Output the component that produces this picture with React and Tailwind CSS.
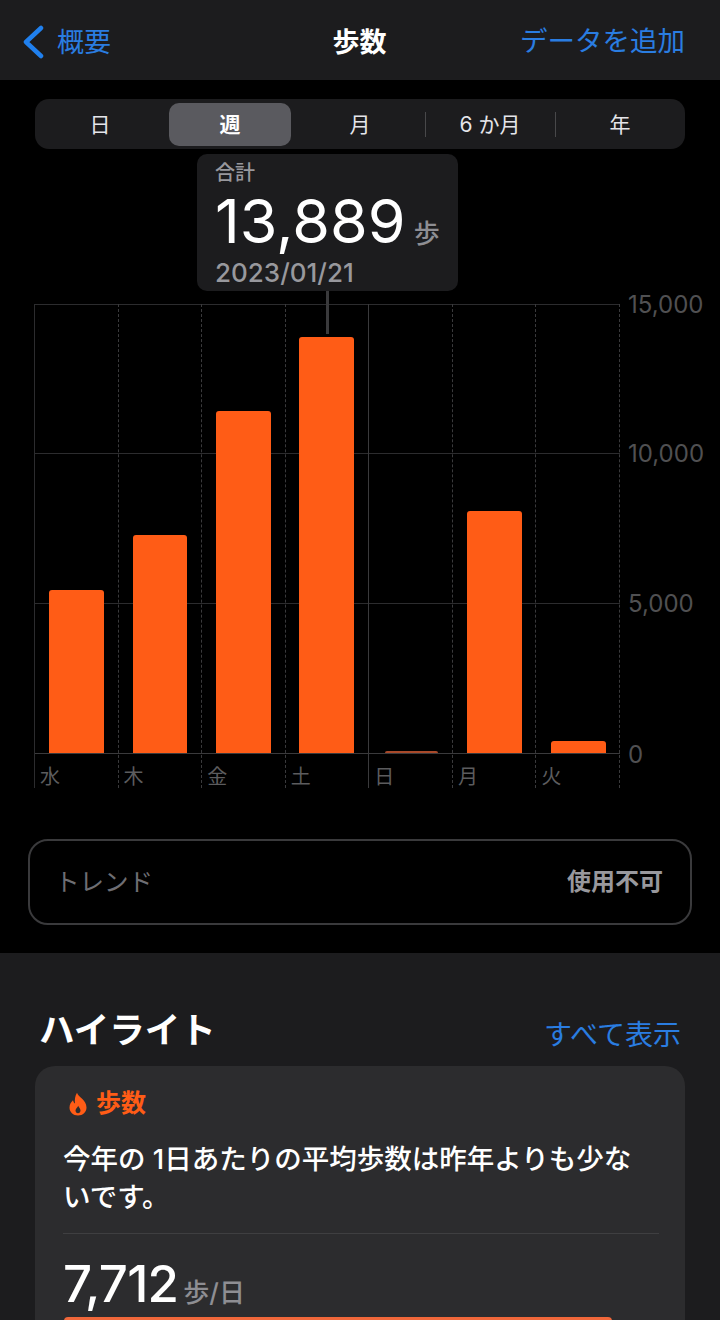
const days = [
  { label: '水', height: 163, left: 14, width: 55, first: true },
  { label: '木', height: 218, left: 14, width: 54 },
  { label: '金', height: 342, left: 14, width: 55 },
  { label: '土', height: 416, left: 13, width: 55 },
  { label: '日', height: 2, left: 16, width: 53, faint: true, solid: true },
  { label: '月', height: 242, left: 14, width: 55 },
  { label: '火', height: 12, left: 15, width: 55 },
];

const tabs = ['日', '週', '月', '6 か月', '年'];

const Flame = () => (
  <svg width="20" height="24" viewBox="0 0 20 24" fill="#ff5c16">
    <path
      fillRule="evenodd"
      d="M9 .8C10 5 18.500 8 18.500 15.500 18.500 20 14.800 23.500 10 23.500S1.500 20 1.500 15.500C1.500 12.500 3.200 10 5 8.300 5.400 9.800 6 11 7 11.500 6.500 8 7 4 9 .8zM10.200 13.800C9.700 15.500 7.500 16.500 7.500 18.600 7.500 20.200 8.600 21.200 10 21.200S12.500 20.200 12.500 18.600C12.500 16.500 10.800 15.500 10.200 13.800z"
    />
  </svg>
);

const App = () => {
  return (
    <div className="h-[1320px] w-[720px] overflow-hidden bg-black font-['Inter','Noto_Sans_CJK_JP',sans-serif] text-white">
      {/* Nav */}
      <div className="flex h-[80px] items-center justify-between bg-[#1c1c1e] pl-[22px] pr-[35px] pt-[4px]">
        <div className="flex w-[212px] items-center gap-[13px] text-[#2a7de1]">
          <svg width="22" height="34" viewBox="0 0 22 34" fill="none" stroke="#2080ee" strokeWidth="4.500" strokeLinecap="round" strokeLinejoin="round">
            <path d="M19 3 L4 17 L19 31" />
          </svg>
          <span className="text-[27px] leading-none">概要</span>
        </div>
        <span className="text-[27px] font-bold leading-none">歩数</span>
        <span className="flex w-[200px] justify-end whitespace-nowrap text-[27.500px] leading-none text-[#2a7de1]">データを追加</span>
      </div>

      <div className="px-[35px] pt-[19px]">
        {/* Segments */}
        <div className="flex h-[50px] items-center rounded-[14px] bg-[#1c1c1e]">
          {tabs.map((tab, i) => (
            <div key={tab} className="relative flex h-[43px] flex-1 items-center justify-center">
              <div
                className={`flex h-full w-[122px] items-center justify-center rounded-[10px] pt-px text-[21px] ${
                  i === 1 ? 'bg-[#5a5a5f] font-bold' : 'text-[#e5e5ea]'
                }`}
              >
                {tab}
              </div>
              {i > 2 && <div className="absolute left-0 top-[9px] h-[25px] w-px bg-[#48484a]" />}
            </div>
          ))}
        </div>

        {/* Chart */}
        <div className="relative mt-[155px] h-[484px] w-[650px]">
          <div className="w-[585px]">
            <div className="h-[149px] border-t border-[#2c2c2e]" />
            <div className="h-[150px] border-t border-[#2c2c2e]" />
            <div className="h-[150px] border-t border-[#2c2c2e]" />
            <div className="border-t border-[#3a3a3c]" />
          </div>

          <div className="absolute inset-y-0 left-0 flex w-[586px] -translate-x-px">
            {days.map((day) => (
              <div
                key={day.label}
                className={`relative h-full flex-1 border-l ${
                  day.solid
                    ? 'border-solid border-[#3a3a3c]'
                    : day.first
                      ? 'border-solid border-[#2c2c2e]'
                      : 'border-dashed border-[#3a3a3c]'
                }`}
              >
                <div
                  className={`absolute top-[449px] -translate-y-full rounded-t-[3px] ${
                    day.faint ? 'bg-[#a8492a]' : 'bg-[#ff5c16]'
                  }`}
                  style={{ height: day.height, left: day.left, width: day.width }}
                />
                <span className="absolute left-[5px] top-[463px] text-[20px] leading-none text-[#5c5c5e]">{day.label}</span>
              </div>
            ))}
            <div className="h-full border-l border-dashed border-[#3a3a3c]" />
          </div>

          {[
            ['15,000', 1],
            ['10,000', 150],
            ['5,000', 300],
            ['0', 451],
          ].map(([value, top]) => (
            <span
              key={value}
              className="absolute left-[593px] -translate-y-1/2 whitespace-nowrap text-[24px] leading-none text-[#505052]"
              style={{ top }}
            >
              {value}
            </span>
          ))}

          {/* Tooltip */}
          <div className="absolute left-[162px] top-[-150px] h-[137px] w-[261px] rounded-[10px] bg-[#1c1c1e] px-[18px] pt-[9px]">
            <div className="text-[20px] font-medium leading-[20px] text-[#98989d]">合計</div>
            <div className="mt-[3px] flex items-baseline gap-[8px]">
              <span className="text-[61px] font-normal leading-[70px]">13,889</span>
              <span className="text-[26px] font-medium leading-none text-[#8e8e93]">歩</span>
            </div>
            <div className="mt-[3px] text-[26px] font-medium leading-[28px] text-[#98989d]">2023/01/21</div>
          </div>
          <div className="absolute left-[291px] top-[-13px] h-[43px] w-[3px] bg-[#3a3a3c]" />
        </div>

        {/* Trend */}
        <div className="-mx-[7px] mt-[51px] flex h-[86px] items-center justify-between rounded-[20px] border-2 border-[#3a3a3c] pl-[25px] pr-[27px]">
          <span className="text-[24.500px] text-[#6e6e73]">トレンド</span>
          <span className="text-[24px] font-semibold text-[#98989d]">使用不可</span>
        </div>
      </div>

      {/* Highlights */}
      <div className="mt-[28px] h-[400px] bg-[#1c1c1e] px-[35px] pt-[56px]">
        <div className="flex items-center justify-between pl-[4px] pr-[4px]">
          <span className="text-[35.500px] font-bold leading-[44px]">ハイライト</span>
          <span className="mt-[8px] text-[28px] leading-none text-[#2a7de1]">すべて表示</span>
        </div>
        <div className="mt-[13px] h-[300px] rounded-[20px] bg-[#2c2c2e] pl-[28px] pr-[26px] pt-[25px]">
          <div className="flex items-center gap-[8px] pl-[5px]">
            <Flame />
            <span className="text-[25px] font-bold leading-none text-[#ff5c16]">歩数</span>
          </div>
          <p className="mt-[24px] pr-[12px] text-[27.500px] font-medium leading-[38px]">今年の 1日あたりの平均歩数は昨年よりも少ないです。</p>
          <div className="mt-[17px] border-t border-[#3f3f41]" />
          <div className="mt-[20px] flex items-baseline gap-[5px]">
            <span className="text-[51px] font-medium leading-[60px] tracking-[-0.750px]">7,712</span>
            <span className="text-[26px] font-medium leading-none text-[#8e8e93]">歩/日</span>
          </div>
          <div className="ml-[1px] mt-[3px] h-[10px] w-[548px] rounded-[4px] bg-[#f0673a]" />
        </div>
      </div>
    </div>
  );
};

export default App;
